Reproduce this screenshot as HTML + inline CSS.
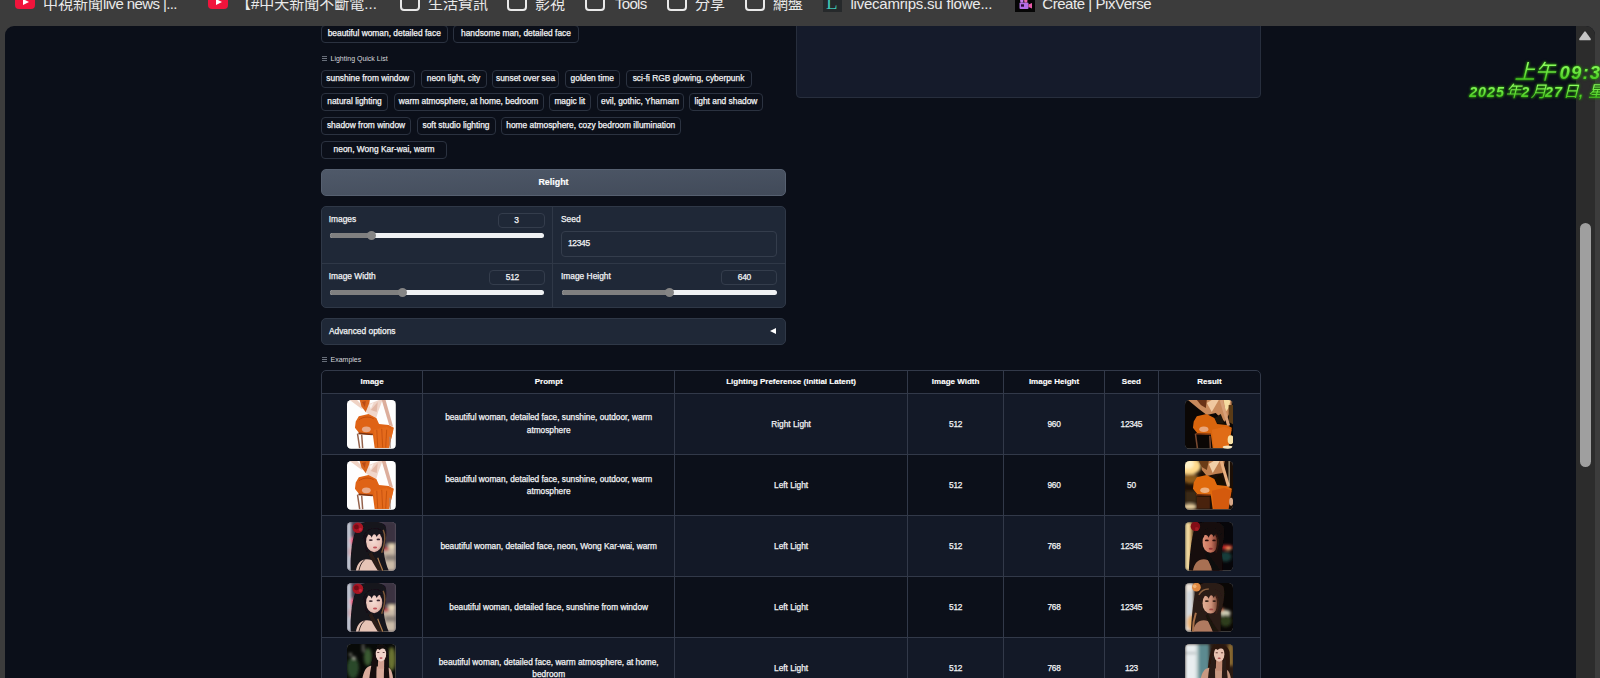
<!DOCTYPE html>
<html lang="zh-Hant">
<head>
<meta charset="utf-8">
<title>IC-Light</title>
<style>
*{box-sizing:border-box;margin:0;padding:0}
html,body{width:1600px;height:678px;overflow:hidden;background:#3c3c3c}
body{position:relative;font-family:"Liberation Sans","Noto Sans CJK TC",sans-serif;color:#f3f4f6;font-size:8.4px}
.abs{position:absolute}
/* browser chrome */
#bar{position:absolute;left:0;top:0;width:1600px;height:26px;background:#3c3c3c;overflow:hidden}
#bar .bm{position:absolute;top:-6.5px;height:20px;line-height:20px;font-size:15px;color:#eaeaea;white-space:nowrap}
#bar .yt{position:absolute;top:-6.6px;width:20px;height:16px;border-radius:4px;background:#f0143c}
#bar .yt:after{content:"";position:absolute;left:7.5px;top:5.6px;border-left:6px solid #fff;border-top:3.5px solid transparent;border-bottom:3.5px solid transparent}
#bar .fd{position:absolute;top:-8px;width:20px;height:19.2px;border:2px solid #e9e9e9;border-radius:4px}
/* page */
#page{position:absolute;left:5px;top:26px;width:1590px;height:660px;background:#0b0f19;border-radius:9px 9px 0 0;overflow:hidden}
#sb{position:absolute;left:1576px;top:26px;width:19px;height:652px;background:#2c2c2c;border-radius:0 9px 0 0}
#sb .up{position:absolute;left:3.1px;top:5px;width:12px;height:9.5px}
#sb .th{position:absolute;left:3.6px;top:196.5px;width:11.4px;height:244px;border-radius:6px;background:#9f9f9f}
.chip{position:absolute;height:18px;line-height:14.6px;border:1px solid #2b3240;border-radius:4px;background:#0b0f19;text-align:center;white-space:nowrap;font-size:8.4px;color:#f3f4f6}
.lbl{position:absolute;font-size:7px;color:#d6d9de;white-space:nowrap}
.t{position:absolute;white-space:nowrap}

.btn{background:linear-gradient(to bottom right,#4f5969,#414a59);border:1px solid #566070;border-radius:5px;text-align:center;line-height:25.6px;font-weight:bold;font-size:8.9px;color:#fff}
.panel{background:#1f2837;border:1px solid #2f3847;border-radius:5px}
.nb{border:1px solid #343d4c;border-radius:4px;background:#1f2837}
.pl{color:#f3f4f6;font-size:8.4px;line-height:12px}
.ham{display:inline-block;width:5px;height:5px;margin-right:3.5px;vertical-align:0.5px;border-top:1px solid #7f8590;border-bottom:1px solid #7f8590;position:relative;opacity:.8}
.ham:after{content:"";position:absolute;left:0;right:0;top:1px;height:1px;background:#8a909c}
.tbl{border:1px solid #2a3140;border-radius:5px;overflow:hidden;background:#0c101a}
.th{text-align:center;font-weight:bold;font-size:8px;color:#fff}
.td{text-align:center;font-size:8.3px;line-height:12.6px;display:flex;align-items:center;justify-content:center;color:#f3f4f6}
.thumb{width:48.6px;height:48.6px;border-radius:4.5px;background:#888;overflow:hidden}

#clip{position:absolute;left:5px;top:26px;width:1572px;height:652px;overflow:hidden;border-radius:9px 0 0 0}
#inner{position:absolute;left:-5px;top:-26px;width:1600px;height:704px}
#clock{position:absolute;left:1440px;top:50px;width:160px;height:60px;overflow:hidden;font-style:italic;font-weight:bold;white-space:nowrap}
#clock .l1{position:absolute;left:74.5px;top:10px;font-size:18.5px;line-height:24px}
#clock .l1,#clock .l2{color:#5fe634;background:linear-gradient(#8dff5e 18%,#43c41c 82%);-webkit-background-clip:text;background-clip:text;-webkit-text-fill-color:transparent;filter:drop-shadow(0 0 0.8px #2f9412) drop-shadow(0 0.5px 0.8px #1f6e0a);padding-right:30px}
#clock .l1 .cj{font-weight:normal;font-size:20.5px}
#clock .l1 .dg{letter-spacing:1.2px}
#clock .l2 .cj{font-weight:normal}
#clock .l2 .d2{font-size:14.3px;letter-spacing:0.95px}
#clock .l2{position:absolute;left:29.2px;top:32.4px;font-size:15.9px;line-height:20px}
#bar .la{letter-spacing:-0.6px}
#bar .ic1{position:absolute;left:822.6px;top:-8px;width:19.8px;height:20.4px;background:#26292b;overflow:hidden}
#bar .ic1 span{position:absolute;left:3.5px;top:1.2px;font-family:"Liberation Serif",serif;font-size:19px;line-height:20px;color:#3fc4b4}
#bar .ic2{position:absolute;left:1015px;top:-7.6px;width:20px;height:20px;background:#060606;overflow:hidden}
.td,.chip,.pl,.t{-webkit-text-stroke:0.25px currentColor}
.th,.btn{-webkit-text-stroke:0.15px currentColor}
.num{letter-spacing:-0.3px}
</style>
</head>
<body>
<div id="bar">
  <div class="yt" style="left:15px"></div>
  <div class="bm" style="left:43px">中視新聞<span class="la">live news |...</span></div>
  <div class="yt" style="left:208px"></div>
  <div class="bm" style="left:236px">【#中天新聞不斷電...</div>
  <div class="fd" style="left:400px"></div>
  <div class="bm" style="left:428px">生活資訊</div>
  <div class="fd" style="left:507px"></div>
  <div class="bm" style="left:535px">影視</div>
  <div class="fd" style="left:585px"></div>
  <div class="bm" style="left:615px;letter-spacing:-0.7px">Tools</div>
  <div class="fd" style="left:667px"></div>
  <div class="bm" style="left:695px">分享</div>
  <div class="fd" style="left:745px"></div>
  <div class="bm" style="left:773px">網盤</div>
  <div class="ic1"><span>L</span></div><div class="bm" style="left:850.4px;letter-spacing:-0.21px">livecamrips.su flowe...</div>
  <div class="ic2"><svg viewBox="0 0 20 20" width="20" height="20" style="position:absolute;left:0;top:2.2px"><rect x="4.5" y="7.5" width="9" height="6.5" rx="1" fill="#b46ee8"/><path d="M13.5,9.6 L17,8 L17,13.6 L13.5,12 Z" fill="#e85aa8"/><circle cx="6.8" cy="6" r="1.7" fill="#c67cf0"/><circle cx="10.8" cy="6" r="1.7" fill="#e86ab0"/><rect x="6" y="9.3" width="3" height="2.4" fill="#2a0a3a"/></svg></div><div class="bm" style="left:1042.3px;letter-spacing:-0.45px">Create | PixVerse</div>
</div>
<div id="page"></div>
<div id="clip"><div id="inner">
<div class="chip" style="left:321px;top:25px;width:126.5px">beautiful woman, detailed face</div>
<div class="chip" style="left:453px;top:25px;width:126px">handsome man, detailed face</div>
<div class="lbl" style="left:322px;top:55px"><span class="ham"></span>Lighting Quick List</div>
<div class="chip" style="left:321px;top:70px;width:93.5px">sunshine from window</div>
<div class="chip" style="left:420.5px;top:70px;width:66.0px">neon light, city</div>
<div class="chip" style="left:492px;top:70px;width:67px">sunset over sea</div>
<div class="chip" style="left:564.5px;top:70px;width:55.5px">golden time</div>
<div class="chip" style="left:625.5px;top:70px;width:126.0px">sci-fi RGB glowing, cyberpunk</div>
<div class="chip" style="left:321px;top:93px;width:67px">natural lighting</div>
<div class="chip" style="left:393.5px;top:93px;width:150.0px">warm atmosphere, at home, bedroom</div>
<div class="chip" style="left:548.5px;top:93px;width:42.5px">magic lit</div>
<div class="chip" style="left:596.5px;top:93px;width:87.0px">evil, gothic, Yharnam</div>
<div class="chip" style="left:689px;top:93px;width:74px">light and shadow</div>
<div class="chip" style="left:321px;top:117px;width:90px">shadow from window</div>
<div class="chip" style="left:416.5px;top:117px;width:79.0px">soft studio lighting</div>
<div class="chip" style="left:501px;top:117px;width:179.5px">home atmosphere, cozy bedroom illumination</div>
<div class="chip" style="left:321px;top:141px;width:126px">neon, Wong Kar-wai, warm</div>
<div class="abs" style="left:796px;top:20px;width:465px;height:78px;background:#151b2b;border:1px solid #272e3d;border-radius:4px"></div>
<div class="abs btn" style="left:321px;top:169px;width:465px;height:27px">Relight</div>
<div class="abs panel" style="left:321px;top:206px;width:465px;height:102px">
<div class="abs" style="left:229.6px;top:0;width:1px;height:100px;background:#2f3847"></div>
<div class="abs" style="left:0;top:56.4px;width:463px;height:1px;background:#2f3847"></div>
</div>
<div class="t pl" style="left:328.7px;top:213px">Images</div>
<div class="abs nb" style="left:497.6px;top:213.2px;width:47.60000000000002px;height:14.600000000000023px"></div>
<div class="t num" style="left:496.4px;width:40px;text-align:center;top:213.2px;line-height:14.600000000000023px">3</div>
<div class="abs" style="left:330px;top:233.2px;width:213.60000000000002px;height:5px;border-radius:3px;background:#eff1f3"></div>
<div class="abs" style="left:330px;top:233.2px;width:41.60000000000002px;height:5px;border-radius:3px;background:#808080"></div>
<div class="abs" style="left:367.1px;top:231.2px;width:9px;height:9px;border-radius:50%;background:#858585"></div>
<div class="t pl" style="left:561px;top:213px">Seed</div>
<div class="abs nb" style="left:561px;top:231.4px;width:216.4px;height:25.2px"></div>
<div class="t num" style="left:568px;top:231.4px;line-height:25.2px">12345</div>
<div class="t pl" style="left:328.7px;top:270px">Image Width</div>
<div class="abs nb" style="left:489px;top:270.4px;width:56.200000000000045px;height:14.400000000000034px"></div>
<div class="t num" style="left:492.4px;width:40px;text-align:center;top:270.4px;line-height:14.400000000000034px">512</div>
<div class="abs" style="left:330px;top:290.1px;width:213.60000000000002px;height:5px;border-radius:3px;background:#eff1f3"></div>
<div class="abs" style="left:330px;top:290.1px;width:72px;height:5px;border-radius:3px;background:#808080"></div>
<div class="abs" style="left:397.5px;top:288.1px;width:9px;height:9px;border-radius:50%;background:#858585"></div>
<div class="t pl" style="left:561px;top:270px">Image Height</div>
<div class="abs nb" style="left:721.4px;top:270.4px;width:56.0px;height:14.400000000000034px"></div>
<div class="t num" style="left:724.4px;width:40px;text-align:center;top:270.4px;line-height:14.400000000000034px">640</div>
<div class="abs" style="left:561.6px;top:290.1px;width:215.0px;height:5px;border-radius:3px;background:#eff1f3"></div>
<div class="abs" style="left:561.6px;top:290.1px;width:107.39999999999998px;height:5px;border-radius:3px;background:#808080"></div>
<div class="abs" style="left:664.5px;top:288.1px;width:9px;height:9px;border-radius:50%;background:#858585"></div>
<div class="abs panel" style="left:321px;top:318.4px;width:465px;height:26.4px"></div>
<div class="t pl" style="left:328.9px;top:319px;line-height:25px">Advanced options</div>
<div class="abs" style="left:769.5px;top:327.5px;border-right:6px solid #fff;border-top:3.2px solid transparent;border-bottom:3.2px solid transparent"></div>
<div class="lbl" style="left:322px;top:356px"><span class="ham"></span>Examples</div>
<div class="abs tbl" style="left:321.0px;top:370px;width:940.0999999999999px;height:320px;border-color:#323949">
<div class="abs" style="left:0;top:22.2px;width:100%;height:61.1px;background:#131927;border-top:1px solid #323949"></div>
<div class="abs" style="left:0;top:83.3px;width:100%;height:61.0px;background:#0c101a;border-top:1px solid #323949"></div>
<div class="abs" style="left:0;top:144.3px;width:100%;height:61.0px;background:#131927;border-top:1px solid #323949"></div>
<div class="abs" style="left:0;top:205.3px;width:100%;height:61.0px;background:#0c101a;border-top:1px solid #323949"></div>
<div class="abs" style="left:0;top:266.3px;width:100%;height:61.0px;background:#131927;border-top:1px solid #323949"></div>
<div class="abs" style="left:100.3px;top:0;width:1px;height:100%;background:#323949"></div>
<div class="abs" style="left:352.1px;top:0;width:1px;height:100%;background:#323949"></div>
<div class="abs" style="left:585.1px;top:0;width:1px;height:100%;background:#323949"></div>
<div class="abs" style="left:681.1px;top:0;width:1px;height:100%;background:#323949"></div>
<div class="abs" style="left:781.9px;top:0;width:1px;height:100%;background:#323949"></div>
<div class="abs" style="left:835.9px;top:0;width:1px;height:100%;background:#323949"></div>
<div class="t th" style="left:-0.5px;width:101.3px;top:-0.4px;line-height:22.2px">Image</div>
<div class="t th" style="left:100.8px;width:251.8px;top:-0.4px;line-height:22.2px">Prompt</div>
<div class="t th" style="left:352.6px;width:233.0px;top:-0.4px;line-height:22.2px">Lighting Preference (Initial Latent)</div>
<div class="t th" style="left:585.6px;width:96.0px;top:-0.4px;line-height:22.2px">Image Width</div>
<div class="t th" style="left:681.6px;width:100.8px;top:-0.4px;line-height:22.2px">Image Height</div>
<div class="t th" style="left:782.4px;width:54.0px;top:-0.4px;line-height:22.2px">Seed</div>
<div class="t th" style="left:836.4px;width:102.2px;top:-0.4px;line-height:22.2px">Result</div>
<div class="t td" style="left:100.8px;width:251.8px;top:40.0px;height:26px"><span>beautiful woman, detailed face, sunshine, outdoor, warm<br>atmosphere</span></div>
<div class="t td" style="left:352.6px;width:233.0px;top:40.0px;height:26px"><span>Right Light</span></div>
<div class="t td num" style="left:585.6px;width:96.0px;top:40.0px;height:26px"><span>512</span></div>
<div class="t td num" style="left:681.6px;width:100.8px;top:40.0px;height:26px"><span>960</span></div>
<div class="t td num" style="left:782.4px;width:54.0px;top:40.0px;height:26px"><span>12345</span></div>
<div class="abs thumb in0" style="left:25.2px;top:29.1px"><svg viewBox="0 0 49 49" width="48.6" height="48.6" preserveAspectRatio="none" style="display:block"><defs><filter id="bi0" x="-20%" y="-20%" width="140%" height="140%"><feGaussianBlur stdDeviation="0.6"/></filter><filter id="ci0" x="-30%" y="-30%" width="160%" height="160%"><feGaussianBlur stdDeviation="1.6"/></filter></defs><rect width="49" height="49" fill="#fefefe"/><g filter="url(#bi0)"><polygon points="2.7,0 10.2,0 18.1,8.4 14.6,8.8" fill="#efd2c4"/><polygon points="12.8,0 23,0 22.1,6.6 19,12.4 14.6,6.6" fill="#d8641e"/><polygon points="15,2 19,1 18,7" fill="#b84a12"/><polygon points="22.1,4 32.3,0 35.8,0 31.4,11.9 29.6,18 21.7,14.4 19,12" fill="#f0d6ca"/><polygon points="24,10 31,2 30,12" fill="#e2b8a6"/><polygon points="22.5,5 27,2.5 24,9" fill="#faf2ee"/><polygon points="35,0 38.9,0 46.5,27 42.5,25.2" fill="#dcae9c"/><polygon points="11.9,16.4 21.7,14.2 29.6,18.1 32.3,24.3 42,25.2 47.3,27.9 45.6,35 42,48.5 27.9,48.5 26.1,35 12.8,34.1 8,27.9 8.8,21.7" fill="#df6416"/><polygon points="27,30 40,27 46.5,30 42.5,48.5 29,48.5" fill="#e46a1a"/><path d="M30,30 L31,48 M35,29 L36,48 M40,30 L39,48" stroke="#c4500e" stroke-width="0.9" fill="none"/><path d="M12,20 C16,17 22,16 27,19" stroke="#c04c0c" stroke-width="1" fill="none"/><ellipse cx="19.5" cy="29.6" rx="4.4" ry="2.9" fill="#e8aa8a"/><path d="M11.5,33.6 L26,34.8" stroke="#7a3010" stroke-width="1.7"/><path d="M10.6,34 L12.8,48.5 M14.8,35 L15.8,48.5" stroke="#94624c" stroke-width="1.5" fill="none"/><path d="M43.3,37 L43.6,48.5" stroke="#a08a84" stroke-width="1.1" fill="none"/></g></svg></div>
<div class="abs thumb out0" style="left:862.7px;top:29.1px"><svg viewBox="0 0 49 49" width="48.6" height="48.6" preserveAspectRatio="none" style="display:block"><defs><filter id="bo0" x="-20%" y="-20%" width="140%" height="140%"><feGaussianBlur stdDeviation="0.6"/></filter><filter id="co0" x="-30%" y="-30%" width="160%" height="160%"><feGaussianBlur stdDeviation="1.6"/></filter></defs><rect width="49" height="49" fill="#0b0705"/><g filter="url(#bo0)"><polygon points="3,0 47,0 47,10 40,22 31,13 22,15 14,9" fill="#c98a5c"/><polygon points="12,0 22,0 21,8 16,5" fill="#6a3316"/><polygon points="22,3 27,0 34,0 27,12" fill="#f0c8a0"/><polygon points="39,0 46,0 44,8 41,12" fill="#f6dca0"/><polygon points="44,5 49,5 49,25 44,22" fill="#5a3a18"/><path d="M36.5,0 L44,26" stroke="#d8a078" stroke-width="3" fill="none"/><polygon points="30,18 36,14 40,24 31,24" fill="#1a1208"/><polygon points="11.9,16.4 21.7,14.2 29.6,18.1 32.3,24.3 42,25.2 47.3,27.9 45.6,35 42,48.5 27.9,48.5 26.1,35 12.8,34.1 8,27.9 8.8,21.7" fill="#d9650f"/><polygon points="27,30 40,27 47,30 44,48.5 29,48.5" fill="#e06c14"/><ellipse cx="19" cy="29.5" rx="4.6" ry="2.8" fill="#e9a67c"/><path d="M11,34 L26,34.5" stroke="#7a3410" stroke-width="1.5"/><path d="M10.5,34 L12.5,48.5 M25,36 L25.6,48.5" stroke="#7a4a30" stroke-width="1.5" fill="none"/><ellipse cx="46" cy="40" rx="3" ry="4.5" fill="#f8e2a8"/><ellipse cx="43" cy="47.5" rx="5" ry="1.6" fill="#f6e6c0"/></g></svg></div>
<div class="t td" style="left:100.8px;width:251.8px;top:101.1px;height:26px"><span>beautiful woman, detailed face, sunshine, outdoor, warm<br>atmosphere</span></div>
<div class="t td" style="left:352.6px;width:233.0px;top:101.1px;height:26px"><span>Left Light</span></div>
<div class="t td num" style="left:585.6px;width:96.0px;top:101.1px;height:26px"><span>512</span></div>
<div class="t td num" style="left:681.6px;width:100.8px;top:101.1px;height:26px"><span>960</span></div>
<div class="t td num" style="left:782.4px;width:54.0px;top:101.1px;height:26px"><span>50</span></div>
<div class="abs thumb in1" style="left:25.2px;top:90.1px"><svg viewBox="0 0 49 49" width="48.6" height="48.6" preserveAspectRatio="none" style="display:block"><defs><filter id="bi1" x="-20%" y="-20%" width="140%" height="140%"><feGaussianBlur stdDeviation="0.6"/></filter><filter id="ci1" x="-30%" y="-30%" width="160%" height="160%"><feGaussianBlur stdDeviation="1.6"/></filter></defs><rect width="49" height="49" fill="#fefefe"/><g filter="url(#bi1)"><polygon points="2.7,0 10.2,0 18.1,8.4 14.6,8.8" fill="#efd2c4"/><polygon points="12.8,0 23,0 22.1,6.6 19,12.4 14.6,6.6" fill="#d8641e"/><polygon points="15,2 19,1 18,7" fill="#b84a12"/><polygon points="22.1,4 32.3,0 35.8,0 31.4,11.9 29.6,18 21.7,14.4 19,12" fill="#f0d6ca"/><polygon points="24,10 31,2 30,12" fill="#e2b8a6"/><polygon points="22.5,5 27,2.5 24,9" fill="#faf2ee"/><polygon points="35,0 38.9,0 46.5,27 42.5,25.2" fill="#dcae9c"/><polygon points="11.9,16.4 21.7,14.2 29.6,18.1 32.3,24.3 42,25.2 47.3,27.9 45.6,35 42,48.5 27.9,48.5 26.1,35 12.8,34.1 8,27.9 8.8,21.7" fill="#df6416"/><polygon points="27,30 40,27 46.5,30 42.5,48.5 29,48.5" fill="#e46a1a"/><path d="M30,30 L31,48 M35,29 L36,48 M40,30 L39,48" stroke="#c4500e" stroke-width="0.9" fill="none"/><path d="M12,20 C16,17 22,16 27,19" stroke="#c04c0c" stroke-width="1" fill="none"/><ellipse cx="19.5" cy="29.6" rx="4.4" ry="2.9" fill="#e8aa8a"/><path d="M11.5,33.6 L26,34.8" stroke="#7a3010" stroke-width="1.7"/><path d="M10.6,34 L12.8,48.5 M14.8,35 L15.8,48.5" stroke="#94624c" stroke-width="1.5" fill="none"/><path d="M43.3,37 L43.6,48.5" stroke="#a08a84" stroke-width="1.1" fill="none"/></g></svg></div>
<div class="abs thumb out1" style="left:862.7px;top:90.1px"><svg viewBox="0 0 49 49" width="48.6" height="48.6" preserveAspectRatio="none" style="display:block"><defs><filter id="bo1" x="-20%" y="-20%" width="140%" height="140%"><feGaussianBlur stdDeviation="0.6"/></filter><filter id="co1" x="-30%" y="-30%" width="160%" height="160%"><feGaussianBlur stdDeviation="1.6"/></filter></defs><rect width="49" height="49" fill="#1c0f06"/><g filter="url(#co1)"><ellipse cx="4" cy="5" rx="12" ry="9" fill="#ffd98a"/><ellipse cx="3" cy="3" rx="6" ry="5" fill="#fff2c8"/><ellipse cx="6" cy="18" rx="8" ry="5" fill="#8a5a1c"/><ellipse cx="5" cy="46" rx="7" ry="3" fill="#e8d0a0"/><rect x="0" y="30" width="12" height="12" fill="#3a2a14"/></g><g filter="url(#bo1)"><polygon points="16,0 40,0 38,12 31,13 22,15 17,9" fill="#c08050"/><polygon points="14,0 24,0 22,9 17,6" fill="#6a3a16"/><polygon points="24,3 29,0 35,0 28,12" fill="#f2d0a8"/><path d="M36.5,0 L44,26" stroke="#e8b080" stroke-width="3" fill="none"/><path d="M44.5,0 L44.5,24" stroke="#e8d8b0" stroke-width="0.9" fill="none"/><polygon points="30,18 36,13 40,24 31,24" fill="#140c04"/><polygon points="11.9,16.4 21.7,14.2 29.6,18.1 32.3,24.3 42,25.2 47.3,27.9 45.6,35 42,48.5 27.9,48.5 26.1,35 12.8,34.1 8,27.9 8.8,21.7" fill="#e06a0c"/><polygon points="27,30 40,27 47,30 44,48.5 29,48.5" fill="#d45a0c"/><ellipse cx="20" cy="29.5" rx="4.6" ry="2.8" fill="#eeb080"/><path d="M11,34 L26,34.5" stroke="#6a2a0c" stroke-width="1.5"/><rect x="12" y="36" width="13" height="12" fill="#4a2410"/><ellipse cx="46.5" cy="41" rx="2" ry="4" fill="#d8a888"/></g></svg></div>
<div class="t td" style="left:100.8px;width:251.8px;top:162.1px;height:26px"><span>beautiful woman, detailed face, neon, Wong Kar-wai, warm</span></div>
<div class="t td" style="left:352.6px;width:233.0px;top:162.1px;height:26px"><span>Left Light</span></div>
<div class="t td num" style="left:585.6px;width:96.0px;top:162.1px;height:26px"><span>512</span></div>
<div class="t td num" style="left:681.6px;width:100.8px;top:162.1px;height:26px"><span>768</span></div>
<div class="t td num" style="left:782.4px;width:54.0px;top:162.1px;height:26px"><span>12345</span></div>
<div class="abs thumb in2" style="left:25.2px;top:151.1px"><svg viewBox="0 0 49 49" width="48.6" height="48.6" preserveAspectRatio="none" style="display:block"><defs><filter id="bi2" x="-20%" y="-20%" width="140%" height="140%"><feGaussianBlur stdDeviation="0.6"/></filter><filter id="ci2" x="-30%" y="-30%" width="160%" height="160%"><feGaussianBlur stdDeviation="1.6"/></filter></defs><defs><radialGradient id="fi2" cx="0.45" cy="0.45" r="0.65"><stop offset="0" stop-color="#f6dcd4"/><stop offset="0.7" stop-color="#e9c2b8"/><stop offset="1" stop-color="#b88478"/></radialGradient></defs><rect width="49" height="49" fill="#4a4252"/><g filter="url(#ci2)"><rect x="0" y="0" width="4" height="49" fill="#d4dde8"/><ellipse cx="6.5" cy="19" rx="3.5" ry="4" fill="#e8507a"/><ellipse cx="5" cy="30" rx="3.5" ry="6" fill="#d0a0a8"/><rect x="36" y="26" width="13" height="23" fill="#cbbba8"/><ellipse cx="45" cy="24" rx="4" ry="3" fill="#e8d8b8"/><rect x="36" y="0" width="13" height="22" fill="#3a3040"/><ellipse cx="39" cy="27" rx="3" ry="2" fill="#c03040"/><rect x="38" y="33" width="11" height="6" fill="#8a8078"/></g><g filter="url(#bi2)"><path d="M4,49 C3,30 6,10 12,3 C18,-2 34,-2 39,4 C41,12 38,24 37,30 C38,38 40,44 42,49 Z" fill="#17121a"/><ellipse cx="27.4" cy="19.8" rx="8.2" ry="10.6" fill="url(#fi2)"/><path d="M16,17 C18,5 34,2 38,13 C35,10 32,11 30,15 C28,11 26,12 25,16 C23,11 19,12 16,17 Z" fill="#17121a"/><path d="M18,14 C18.5,20 18.5,26 20.5,30" stroke="#17121a" stroke-width="1.4" fill="none"/><path d="M36.5,8 C39.5,14 37.5,24 35,31" stroke="#7a5638" stroke-width="1.5" fill="none"/><ellipse cx="24" cy="18.2" rx="2" ry="0.9" fill="#3a2830"/><ellipse cx="31.6" cy="17.6" rx="1.8" ry="0.9" fill="#3a2830"/><ellipse cx="28.3" cy="25.8" rx="2.1" ry="1" fill="#c2545c"/><circle cx="11" cy="5.8" r="5.4" fill="#a81424"/><circle cx="9.5" cy="5" r="2.4" fill="#740a16"/><circle cx="13.5" cy="7.5" r="1.6" fill="#c8283a"/><path d="M9,49 C10,42 14,37.5 20,37.5 C27,37.5 31,42 32,49 Z" fill="#e6c4b6"/><path d="M12,49 C13,44 15,40 18,38" stroke="#2a1c1c" stroke-width="0.9" fill="none"/><path d="M25,30 C28,38 34,44 37,49 L31,49 C28,44 24,38 22,32 Z" fill="#2a1c18"/><path d="M31,36 C33,42 35,46 36,49" stroke="#b08050" stroke-width="1.2" fill="none"/></g></svg></div>
<div class="abs thumb out2" style="left:862.7px;top:151.1px"><svg viewBox="0 0 49 49" width="48.6" height="48.6" preserveAspectRatio="none" style="display:block"><defs><filter id="bo2" x="-20%" y="-20%" width="140%" height="140%"><feGaussianBlur stdDeviation="0.6"/></filter><filter id="co2" x="-30%" y="-30%" width="160%" height="160%"><feGaussianBlur stdDeviation="1.6"/></filter></defs><defs><linearGradient id="fo2" x1="0" x2="1"><stop offset="0" stop-color="#e0937a"/><stop offset="0.55" stop-color="#c4705a"/><stop offset="1" stop-color="#5a261c"/></linearGradient></defs><rect width="49" height="49" fill="#07060a"/><g filter="url(#co2)"><rect x="0" y="0" width="5.5" height="49" fill="#f6dfa4"/><rect x="5" y="0" width="3" height="49" fill="#c09050"/><ellipse cx="42" cy="25.5" rx="6" ry="2.4" fill="#d82a2a"/><ellipse cx="44" cy="27" rx="2.5" ry="1.5" fill="#ffb070"/><ellipse cx="41" cy="35" rx="6" ry="5" fill="#183e3a"/></g><g filter="url(#bo2)"><path d="M4,49 C5,30 7,10 12,3 C18,-2 34,-2 39,4 C41,12 38,24 37,30 C38,38 38,44 38,49 Z" fill="#120a0a"/><ellipse cx="25.7" cy="20.6" rx="8.2" ry="10.3" fill="url(#fo2)"/><path d="M14,18 C16,5 33,2 37,13 C34,10 31,11 29,15 C27,11 25,12 24,16 C22,11 17,12 14,18 Z" fill="#140c0c"/><path d="M16.5,14 C16.5,20 16.5,26 18.5,31" stroke="#140c0c" stroke-width="1.6" fill="none"/><path d="M31,12 C34,16 34,24 31,31" stroke="#2a1210" stroke-width="2" fill="none"/><ellipse cx="22" cy="18.6" rx="2" ry="0.9" fill="#2a100c"/><ellipse cx="29.3" cy="18.6" rx="1.8" ry="0.9" fill="#2a100c"/><ellipse cx="26" cy="27" rx="2.1" ry="1" fill="#983434"/><circle cx="10.5" cy="4.5" r="4.8" fill="#821018"/><circle cx="12" cy="7" r="2" fill="#a01a22"/><path d="M8,49 C9,42 13,37.5 19,37.5 C25,37.5 27,42 27,49 Z" fill="#a87052"/><path d="M23,31 C26,38 32,44 35,49 L28,49 C26,44 23,38 21,33 Z" fill="#100808"/></g></svg></div>
<div class="t td" style="left:100.8px;width:251.8px;top:223.1px;height:26px"><span>beautiful woman, detailed face, sunshine from window</span></div>
<div class="t td" style="left:352.6px;width:233.0px;top:223.1px;height:26px"><span>Left Light</span></div>
<div class="t td num" style="left:585.6px;width:96.0px;top:223.1px;height:26px"><span>512</span></div>
<div class="t td num" style="left:681.6px;width:100.8px;top:223.1px;height:26px"><span>768</span></div>
<div class="t td num" style="left:782.4px;width:54.0px;top:223.1px;height:26px"><span>12345</span></div>
<div class="abs thumb in3" style="left:25.2px;top:212.1px"><svg viewBox="0 0 49 49" width="48.6" height="48.6" preserveAspectRatio="none" style="display:block"><defs><filter id="bi3" x="-20%" y="-20%" width="140%" height="140%"><feGaussianBlur stdDeviation="0.6"/></filter><filter id="ci3" x="-30%" y="-30%" width="160%" height="160%"><feGaussianBlur stdDeviation="1.6"/></filter></defs><defs><radialGradient id="fi3" cx="0.45" cy="0.45" r="0.65"><stop offset="0" stop-color="#f6dcd4"/><stop offset="0.7" stop-color="#e9c2b8"/><stop offset="1" stop-color="#b88478"/></radialGradient></defs><rect width="49" height="49" fill="#4a4252"/><g filter="url(#ci3)"><rect x="0" y="0" width="4" height="49" fill="#d4dde8"/><ellipse cx="6.5" cy="19" rx="3.5" ry="4" fill="#e8507a"/><ellipse cx="5" cy="30" rx="3.5" ry="6" fill="#d0a0a8"/><rect x="36" y="26" width="13" height="23" fill="#cbbba8"/><ellipse cx="45" cy="24" rx="4" ry="3" fill="#e8d8b8"/><rect x="36" y="0" width="13" height="22" fill="#3a3040"/><ellipse cx="39" cy="27" rx="3" ry="2" fill="#c03040"/><rect x="38" y="33" width="11" height="6" fill="#8a8078"/></g><g filter="url(#bi3)"><path d="M4,49 C3,30 6,10 12,3 C18,-2 34,-2 39,4 C41,12 38,24 37,30 C38,38 40,44 42,49 Z" fill="#17121a"/><ellipse cx="27.4" cy="19.8" rx="8.2" ry="10.6" fill="url(#fi3)"/><path d="M16,17 C18,5 34,2 38,13 C35,10 32,11 30,15 C28,11 26,12 25,16 C23,11 19,12 16,17 Z" fill="#17121a"/><path d="M18,14 C18.5,20 18.5,26 20.5,30" stroke="#17121a" stroke-width="1.4" fill="none"/><path d="M36.5,8 C39.5,14 37.5,24 35,31" stroke="#7a5638" stroke-width="1.5" fill="none"/><ellipse cx="24" cy="18.2" rx="2" ry="0.9" fill="#3a2830"/><ellipse cx="31.6" cy="17.6" rx="1.8" ry="0.9" fill="#3a2830"/><ellipse cx="28.3" cy="25.8" rx="2.1" ry="1" fill="#c2545c"/><circle cx="11" cy="5.8" r="5.4" fill="#a81424"/><circle cx="9.5" cy="5" r="2.4" fill="#740a16"/><circle cx="13.5" cy="7.5" r="1.6" fill="#c8283a"/><path d="M9,49 C10,42 14,37.5 20,37.5 C27,37.5 31,42 32,49 Z" fill="#e6c4b6"/><path d="M12,49 C13,44 15,40 18,38" stroke="#2a1c1c" stroke-width="0.9" fill="none"/><path d="M25,30 C28,38 34,44 37,49 L31,49 C28,44 24,38 22,32 Z" fill="#2a1c18"/><path d="M31,36 C33,42 35,46 36,49" stroke="#b08050" stroke-width="1.2" fill="none"/></g></svg></div>
<div class="abs thumb out3" style="left:862.7px;top:212.1px"><svg viewBox="0 0 49 49" width="48.6" height="48.6" preserveAspectRatio="none" style="display:block"><defs><filter id="bo3" x="-20%" y="-20%" width="140%" height="140%"><feGaussianBlur stdDeviation="0.6"/></filter><filter id="co3" x="-30%" y="-30%" width="160%" height="160%"><feGaussianBlur stdDeviation="1.6"/></filter></defs><defs><linearGradient id="fo3" x1="0" x2="1"><stop offset="0" stop-color="#e2b098"/><stop offset="0.55" stop-color="#cc9078"/><stop offset="1" stop-color="#6a3a2a"/></linearGradient></defs><rect width="49" height="49" fill="#0a0706"/><g filter="url(#co3)"><rect x="0" y="0" width="9" height="49" fill="#eee6de"/><rect x="2" y="8" width="5" height="30" fill="#cfd6dc"/><ellipse cx="7" cy="40" rx="5" ry="8" fill="#e8b070"/><ellipse cx="40.5" cy="30.5" rx="5.5" ry="3.4" fill="#d4d4bc"/><ellipse cx="37" cy="27" rx="2.4" ry="2" fill="#c86a44"/><ellipse cx="41" cy="38" rx="6" ry="6" fill="#2e3e1a"/></g><g filter="url(#bo3)"><path d="M6,49 C7,30 9,10 13,3 C18,-2 34,-2 39,4 C41,12 38,24 36,30 C36,38 36,44 36,49 Z" fill="#2a1a14"/><ellipse cx="25.7" cy="20.4" rx="8.2" ry="10.4" fill="url(#fo3)"/><path d="M14,18 C16,5 33,2 37,13 C34,10 31,11 29,15 C27,11 25,12 24,16 C22,11 17,12 14,18 Z" fill="#2c1c16"/><path d="M16.5,14 C16.5,20 16.5,26 18.5,31" stroke="#2c1c16" stroke-width="1.6" fill="none"/><path d="M31,12 C34,16 34,24 31,31" stroke="#3a2018" stroke-width="2" fill="none"/><path d="M14,12 C16,8 20,6 24,6" stroke="#8a6040" stroke-width="1.4" fill="none"/><ellipse cx="22" cy="18.2" rx="2" ry="0.9" fill="#2e1a12"/><ellipse cx="29.5" cy="18.2" rx="1.8" ry="0.9" fill="#2e1a12"/><ellipse cx="26.5" cy="26.6" rx="2.1" ry="1" fill="#a04a44"/><circle cx="11.5" cy="4.2" r="4.4" fill="#dc8640"/><circle cx="9.8" cy="3.4" r="1.8" fill="#f0b070"/><path d="M8,49 C9,42 13,37.5 19,37.5 C25,37.5 28,42 28,49 Z" fill="#b07a60"/><path d="M23,31 C26,38 31,44 34,49 L28,49 C26,44 23,38 21,33 Z" fill="#1e120e"/><path d="M11,30 C9,36 8,42 8,49" stroke="#a87048" stroke-width="2" fill="none"/></g></svg></div>
<div class="t td" style="left:100.8px;width:251.8px;top:284.1px;height:26px"><span>beautiful woman, detailed face, warm atmosphere, at home,<br>bedroom</span></div>
<div class="t td" style="left:352.6px;width:233.0px;top:284.1px;height:26px"><span>Left Light</span></div>
<div class="t td num" style="left:585.6px;width:96.0px;top:284.1px;height:26px"><span>512</span></div>
<div class="t td num" style="left:681.6px;width:100.8px;top:284.1px;height:26px"><span>768</span></div>
<div class="t td num" style="left:782.4px;width:54.0px;top:284.1px;height:26px"><span>123</span></div>
<div class="abs thumb in4" style="left:25.2px;top:273.1px"><svg viewBox="0 0 49 49" width="48.6" height="48.6" preserveAspectRatio="none" style="display:block"><defs><filter id="bi4" x="-20%" y="-20%" width="140%" height="140%"><feGaussianBlur stdDeviation="0.6"/></filter><filter id="ci4" x="-30%" y="-30%" width="160%" height="160%"><feGaussianBlur stdDeviation="1.6"/></filter></defs><rect width="49" height="49" fill="#080a08"/><g filter="url(#ci4)"><ellipse cx="6" cy="24" rx="6" ry="11" fill="#2c4a2a"/><ellipse cx="21" cy="13" rx="4" ry="9" fill="#3a5a30"/><ellipse cx="45" cy="15" rx="4" ry="12" fill="#6a7230"/><ellipse cx="7" cy="14" rx="1.4" ry="1.4" fill="#d8d8c8"/><ellipse cx="3.5" cy="10.5" rx="1.2" ry="1.2" fill="#c8c8b8"/><rect x="15.5" y="0" width="1.6" height="8" fill="#8a8a80"/></g><g filter="url(#bi4)"><path d="M22,49 C22,30 26,6 31,1 C35,-1 41,1 42,8 C43,20 41,34 43,49 Z" fill="#120e0c"/><path d="M14,49 C15,30 18,23 24,22 L42,24 C46,26 47,34 47,49 Z" fill="#d9ab9b"/><path d="M31.5,14 L37.5,14 L38,25 L31,25 Z" fill="#d2a090"/><ellipse cx="34.2" cy="10.4" rx="5.4" ry="7.2" fill="#f0d2c8"/><path d="M28,8 C29,2 38,0 41,6 C38,4 35,4 33,6 C31,4 29,5 28,8 Z" fill="#120e0c"/><ellipse cx="34.3" cy="14.2" rx="1.6" ry="0.8" fill="#b85058"/><ellipse cx="31.5" cy="8.6" rx="1.3" ry="0.6" fill="#5a3838"/><ellipse cx="37" cy="8.6" rx="1.2" ry="0.6" fill="#5a3838"/><path d="M28.5,6 C24,20 21,40 22,49 L31,49 C29,38 29.5,26 30.5,17 C29,14 28.5,10 28.5,6 Z" fill="#140e0c"/><path d="M40,6 C42.5,24 43,40 44,49 L37.5,49 C37,38 37,26 38,17 C39.5,14 40,10 40,6 Z" fill="#140e0c"/></g></svg></div>
<div class="abs thumb out4" style="left:862.7px;top:273.1px"><svg viewBox="0 0 49 49" width="48.6" height="48.6" preserveAspectRatio="none" style="display:block"><defs><filter id="bo4" x="-20%" y="-20%" width="140%" height="140%"><feGaussianBlur stdDeviation="0.6"/></filter><filter id="co4" x="-30%" y="-30%" width="160%" height="160%"><feGaussianBlur stdDeviation="1.6"/></filter></defs><rect width="49" height="49" fill="#2a1a12"/><g filter="url(#co4)"><rect x="0" y="0" width="11.5" height="49" fill="#e9eef0"/><rect x="0" y="8.5" width="11" height="1.6" fill="#a8b0b0"/><rect x="11.5" y="0" width="13" height="49" fill="#5c8a90"/><rect x="11" y="0" width="2.5" height="49" fill="#c0d0d0"/><rect x="43" y="0" width="6" height="22" fill="#8a6a30"/></g><g filter="url(#bo4)"><path d="M22,49 C22,30 24,6 29,1 C33,-1 43,0 45,8 C46,20 44,34 46,49 Z" fill="#2a1810"/><path d="M14,49 C15,32 18,25 24,24 L42,26 C46,28 47,36 47,49 Z" fill="#c99a82"/><path d="M31.5,14 L37.5,14 L38,27 L31,27 Z" fill="#c28c74"/><ellipse cx="34.5" cy="10.4" rx="5.4" ry="7.4" fill="#e9c2b0"/><path d="M28,8 C29,2 38,0 41,6 C38,4 35,4 33,6 C31,4 29,5 28,8 Z" fill="#2a1810"/><ellipse cx="34.5" cy="14.4" rx="1.6" ry="0.8" fill="#a84848"/><ellipse cx="32" cy="8.8" rx="1.3" ry="0.6" fill="#5a3028"/><ellipse cx="37.3" cy="8.8" rx="1.2" ry="0.6" fill="#5a3028"/><path d="M28.8,6 C24,20 22,40 23,49 L32,49 C30,38 30,26 30.8,17 C29.3,14 28.8,10 28.8,6 Z" fill="#2c1a12"/><path d="M40.3,6 C42.5,24 43,40 45,49 L37.5,49 C37,38 37,26 38.3,17 C39.8,14 40.3,10 40.3,6 Z" fill="#2c1a12"/></g></svg></div>
</div>
</div></div>
<div id="sb"><svg class="up" viewBox="0 0 12 9.5"><path d="M5.1,0.9 Q6,-0.2 6.9,0.9 L11.6,7.6 Q12.3,9.3 10.6,9.3 L1.4,9.3 Q-0.3,9.3 0.4,7.6 Z" fill="#c6c6c6"/></svg><div class="th"></div></div>
<div id="clock"><div class="l1"><span class="cj">上午</span><span class="dg" style="margin-left:4px">09:3</span></div><div class="l2"><span class="d2">2025</span><span class="cj" style="margin-left:0.6px">年</span><span class="d2">2</span><span class="cj" style="margin-left:0.6px;margin-right:-1.6px">月</span><span class="d2">27</span><span class="cj" style="margin-left:0.2px">日</span><span class="d2">, </span><span class="cj" style="margin-left:-0.9px">星</span></div></div>
</body>
</html>
